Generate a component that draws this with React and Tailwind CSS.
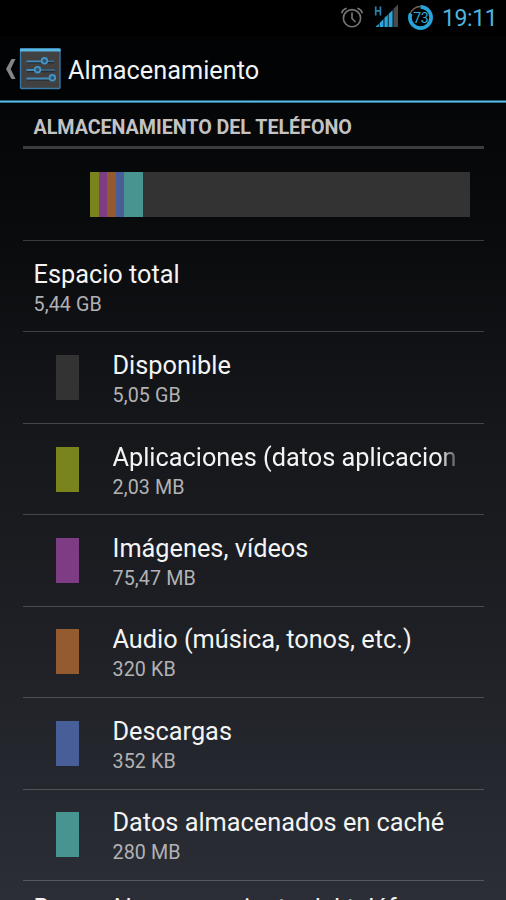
const items = [
  { label: 'Disponible', value: '5,05 GB', color: 'bg-[#333333]' },
  { label: 'Aplicaciones (datos aplicaciones)', value: '2,03 MB', color: 'bg-[#7a841c]', fade: true },
  { label: 'Imágenes, vídeos', value: '75,47 MB', color: 'bg-[#7e3c84]' },
  { label: 'Audio (música, tonos, etc.)', value: '320 KB', color: 'bg-[#945a30]' },
  { label: 'Descargas', value: '352 KB', color: 'bg-[#485e98]' },
  { label: 'Datos almacenados en caché', value: '280 MB', color: 'bg-[#479490]' },
];

function StatusBar() {
  return (
    <div className="flex h-9 shrink-0 items-center bg-black pl-[340px]">
      <svg className="h-9 w-[100px] shrink-0" viewBox="340 0 100 36" fill="none">
        <g stroke="#777777" strokeWidth="1.6">
          <circle cx="352" cy="18.2" r="8.6" />
          <path d="M352 12.5v6l3.5 3.5M341.6 13.2c.7-2.4 2.6-4.3 5-5M362.4 13.2c-.7-2.4-2.6-4.3-5-5" />
        </g>
        <path d="M375.7 6.4v9M380.4 6.4v9M375.7 10.9h4.7" stroke="#2584ae" strokeWidth="1.7" />
        <path d="M375.5 27l3.3-3.3V27zM379.6 27v-4.1l3.9-3.9v8zM384.4 27v-8.9l3.4-3.4V27zM388.6 27V13.9l4-4V27z" fill="#2da5da" />
        <path d="M393.4 27V9.1l4.6-4.6V27z" fill="#4a4a4a" />
        <path d="M409.9 14.6a11 11 0 0 1 10.6-8.1" stroke="#77695a" strokeWidth="1.4" />
        <path d="M420.5 6.9a10.6 10.6 0 1 1-10.6 10.6q0-2 .8-4" stroke="#27a5da" strokeWidth="3.7" />
        <text x="420.7" y="22.5" textAnchor="middle" fontSize="14" fill="#36a9d6" fontFamily="Roboto, sans-serif" letterSpacing="-0.5">73</text>
      </svg>
      <span className="ml-[2px] pt-px text-[23px] leading-9 tracking-[-0.4px] text-[#4fb4dc]">19:11</span>
    </div>
  );
}

function ActionBar() {
  return (
    <header className="flex h-[67px] shrink-0 flex-col bg-[#020304]">
      <div className="flex h-16 items-center">
        <svg className="h-16 w-[62px] shrink-0" viewBox="0 36 62 64" fill="none">
          <path d="M11.5 59h4l-4.8 10 4.8 10h-4L6 69z" fill="#858585" />
          <rect x="20.5" y="49" width="39.5" height="39.5" rx="1" fill="#414141" stroke="#397ba8" strokeWidth="1.3" />
          <path d="M20 50h40.5" stroke="#59b7e5" strokeWidth="3" />
          <path d="M27 62.8h27M27 71.5h28M27 80.1h28" stroke="#292e32" strokeWidth="1.5" />
          <path d="M26.5 61.3H42M26.5 70H35M26.5 78.5H50" stroke="#438bb9" strokeWidth="1.8" />
          <path d="M47 61.3h7M40.5 70H55" stroke="#3a6f94" strokeWidth="1.4" />
          <g stroke="#4593c6" strokeWidth="1.8" fill="#315266">
            <circle cx="44.5" cy="60.8" r="2.8" />
            <circle cx="37.6" cy="69.7" r="2.8" />
            <circle cx="52.4" cy="77.8" r="2.8" />
          </g>
        </svg>
        <h1 className="ml-1.5 pt-1.5 text-[25.3px] leading-[30px] text-[#f4f4f4]">Almacenamiento</h1>
      </div>
      <div className="h-[3px] border-y border-t-[#255e7a] border-b-[#327594] bg-[#5cbce4]" />
    </header>
  );
}

function StorageBar() {
  return (
    <div className="flex h-[92px] shrink-0 border-b border-white/20 pr-3.5 pl-[67px] pt-[23px]">
      <div className="flex h-[45px] w-[380px] bg-[#333333]">
        <div className="w-[9px] bg-[#7a841c]" />
        <div className="w-2 bg-[#7e3c84]" />
        <div className="w-[9px] bg-[#945a30]" />
        <div className="w-2 bg-[#485e98]" />
        <div className="w-[19px] bg-[#479490]" />
      </div>
    </div>
  );
}

function Row({ label, value, color, fade }) {
  return (
    <div className="flex h-[91.43px] shrink-0 items-center border-b border-white/20 pl-[11px]">
      {color && <div className={`mr-[34px] ml-[22px] h-[45px] w-[23px] shrink-0 ${color}`} />}
      <div className="w-[344px] min-w-0 pt-[3px]">
        <div
          className={`overflow-hidden text-[25.3px] leading-[30px] whitespace-nowrap text-[#f4f4f4] ${
            fade ? '[mask-image:linear-gradient(to_right,black_95%,rgba(0,0,0,0.25))]' : ''
          }`}
        >
          {label}
        </div>
        <div className="mt-[3px] text-[19.7px] leading-[23px] tracking-[0.12px] text-[#b2b2b4]">{value}</div>
      </div>
    </div>
  );
}

export default function App() {
  return (
    <div className="flex h-[900px] w-[506px] flex-col overflow-hidden bg-[linear-gradient(to_bottom,#000000_0px,#050607_110px,#0a0b0d_240px,#15171b_430px,#1c1e23_600px,#2b2e36_900px)] font-[Roboto,sans-serif]">
      <StatusBar />
      <ActionBar />
      <main className="flex min-h-0 flex-1 flex-col overflow-hidden px-[22.5px]">
        <h2 className="h-[46px] shrink-0 border-b-[3px] border-[#3b3c3d] pl-[11px] pt-[13px] text-[19.7px] leading-6 font-bold tracking-[-0.04px] text-[#c3c3c3]">
          ALMACENAMIENTO DEL TELÉFONO
        </h2>
        <StorageBar />
        <Row label="Espacio total" value="5,44 GB" />
        {items.map((item) => (
          <Row key={item.label} {...item} />
        ))}
        <div className="shrink-0 pt-[13px] pl-[11px] text-[25.3px] leading-[30px] whitespace-nowrap text-[#f4f4f4]">
          Borrar Almacenamiento del teléfono
        </div>
      </main>
    </div>
  );
}
